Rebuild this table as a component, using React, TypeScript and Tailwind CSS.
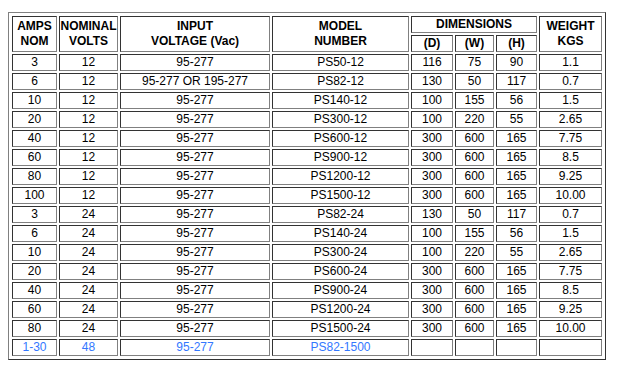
import React from "react";

const rows: string[][] = [
  ["3", "12", "95-277", "PS50-12", "116", "75", "90", "1.1"],
  ["6", "12", "95-277 OR 195-277", "PS82-12", "130", "50", "117", "0.7"],
  ["10", "12", "95-277", "PS140-12", "100", "155", "56", "1.5"],
  ["20", "12", "95-277", "PS300-12", "100", "220", "55", "2.65"],
  ["40", "12", "95-277", "PS600-12", "300", "600", "165", "7.75"],
  ["60", "12", "95-277", "PS900-12", "300", "600", "165", "8.5"],
  ["80", "12", "95-277", "PS1200-12", "300", "600", "165", "9.25"],
  ["100", "12", "95-277", "PS1500-12", "300", "600", "165", "10.00"],
  ["3", "24", "95-277", "PS82-24", "130", "50", "117", "0.7"],
  ["6", "24", "95-277", "PS140-24", "100", "155", "56", "1.5"],
  ["10", "24", "95-277", "PS300-24", "100", "220", "55", "2.65"],
  ["20", "24", "95-277", "PS600-24", "300", "600", "165", "7.75"],
  ["40", "24", "95-277", "PS900-24", "300", "600", "165", "8.5"],
  ["60", "24", "95-277", "PS1200-24", "300", "600", "165", "9.25"],
  ["80", "24", "95-277", "PS1500-24", "300", "600", "165", "10.00"],
];

const cell =
  "border border-t-[#333333] border-l-[#333333] border-b-[#808080] border-r-[#808080] p-0 text-center align-middle leading-[15px] h-[17px]";

const widths = [
  "w-[45px]",
  "w-[59px]",
  "w-[150px]",
  "w-[137px]",
  "w-[42px]",
  "w-[39px]",
  "w-[41px]",
  "w-[63px]",
];

export default function App() {
  return (
    <div
      className="min-h-[377px] w-[618px] bg-white pl-[8px] pt-[12px] text-[12px] text-black"
      style={{ fontFamily: '"Liberation Sans", Arial, sans-serif' }}
    >
      <table className="w-[598px] table-fixed border-separate border-spacing-[2px] border border-t-[#808080] border-l-[#808080] border-b-[#333333] border-r-[#333333] p-px">
        <colgroup>
          {widths.map((w, i) => (
            <col key={i} className={w} />
          ))}
        </colgroup>
        <thead>
          <tr>
            <th rowSpan={2} className={`${cell} font-bold`}>
              AMPS
              <br />
              NOM
            </th>
            <th rowSpan={2} className={`${cell} font-bold`}>
              NOMINAL
              <br />
              VOLTS
            </th>
            <th rowSpan={2} className={`${cell} font-bold`}>
              INPUT
              <br />
              VOLTAGE (Vac)
            </th>
            <th rowSpan={2} className={`${cell} font-bold`}>
              MODEL
              <br />
              NUMBER
            </th>
            <th colSpan={3} className={`${cell} font-bold`}>
              DIMENSIONS
            </th>
            <th rowSpan={2} className={`${cell} font-bold`}>
              WEIGHT
              <br />
              KGS
            </th>
          </tr>
          <tr>
            <th className={`${cell} font-bold`}>(D)</th>
            <th className={`${cell} font-bold`}>(W)</th>
            <th className={`${cell} font-bold`}>(H)</th>
          </tr>
        </thead>
        <tbody>
          {rows.map((r, i) => (
            <tr key={i}>
              {r.map((v, j) => (
                <td key={j} className={`${cell} font-normal`}>
                  {v}
                </td>
              ))}
            </tr>
          ))}
          <tr className="text-[#3377ff]">
            <td className={cell}>1-30</td>
            <td className={cell}>48</td>
            <td className={cell}>95-277</td>
            <td className={cell}>PS82-1500</td>
            <td className={cell}></td>
            <td className={cell}></td>
            <td className={cell}></td>
            <td className={cell}></td>
          </tr>
        </tbody>
      </table>
    </div>
  );
}
